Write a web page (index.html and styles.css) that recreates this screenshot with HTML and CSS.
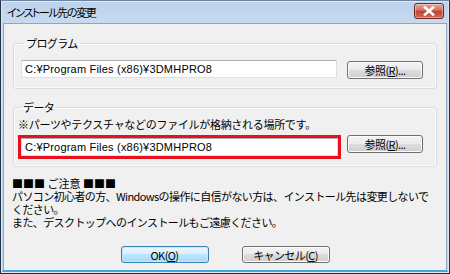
FILE: index.html
```html
<!DOCTYPE html>
<html lang="ja">
<head>
<meta charset="utf-8">
<link rel="stylesheet" href="styles.css">
</head>
<body>
<div class="window">
  <div class="titlebar">
    <span class="title">インストール先の変更</span>
    <button class="close" aria-label="閉じる">
      <svg width="14" height="10" viewBox="0 0 14 10"><path d="M3 1.5 L11 8.5 M11 1.5 L3 8.5" stroke="#ffffff" stroke-width="2.6" stroke-linecap="square"/></svg>
    </button>
  </div>
  <div class="content">
    <fieldset class="group group-program">
      <legend>プログラム</legend>
      <div class="row">
        <div class="field">C:¥Program Files (x86)¥3DMHPRO8</div>
        <button class="btn browse">参照(<u>R</u>)...</button>
      </div>
    </fieldset>
    <fieldset class="group group-data">
      <legend>データ</legend>
      <div class="hint">※パーツやテクスチャなどのファイルが格納される場所です。</div>
      <div class="row row-data">
        <div class="highlight"><div class="field">C:¥Program Files (x86)¥3DMHPRO8</div></div>
        <button class="btn browse">参照(<u>R</u>)...</button>
      </div>
    </fieldset>
    <div class="notes">
      <div class="note-head">■■■ ご注意 ■■■</div>
      <div>パソコン初心者の方、Windowsの操作に自信がない方は、インストール先は変更しないで</div>
      <div>ください。</div>
      <div>また、デスクトップへのインストールもご遠慮ください。</div>
    </div>
    <div class="actions">
      <button class="btn ok">OK(<u>O</u>)</button>
      <button class="btn">キャンセル(<u>C</u>)</button>
    </div>
  </div>
</div>
</body>
</html>
```

FILE: styles.css
```css
html, body {
  margin: 0;
  padding: 0;
  background: #ffffff;
}
body {
  font-family: "Noto Sans CJK JP", "Liberation Sans", sans-serif;
  font-size: 11px;
  color: #000;
}
.window {
  width: 450px;
  height: 274px;
  box-sizing: border-box;
  border: 1px solid #1f2f44;
  border-top-color: #6d84a0;
  background: linear-gradient(#bcd2eb, #c7daf0 22px, #bfd6ee);
  display: flex;
  flex-direction: column;
  padding: 0 2px 2px 2px;
  box-shadow: inset 0 0 0 1px #dbe8f5, inset 0 -2px 0 #3fa9dc;
}
.titlebar {
  height: 22px;
  flex: 0 0 22px;
  display: flex;
  align-items: center;
  justify-content: space-between;
  padding: 0 3px 0 4px;
}
.title {
  font-size: 11px;
  letter-spacing: -1.4px;
  font-feature-settings: "palt";
  line-height: 12px;
  margin-top: -1px;
}
.close {
  width: 30px;
  height: 16px;
  margin-top: -2px;
  padding: 0;
  border: 1px solid #6b2a22;
  border-radius: 3px;
  background: linear-gradient(#e9a79c, #d27160 45%, #c1412f 50%, #d06b55);
  display: flex;
  align-items: center;
  justify-content: center;
  box-shadow: inset 0 0 0 1px rgba(255,255,255,0.35);
}
.content {
  flex: 1;
  background: #f0f0f0;
  border: 1px solid #8ea6c2;
  border-bottom-color: #3fa9dc;
  display: flex;
  flex-direction: column;
  padding: 0 8px;
  box-sizing: border-box;
}
.group {
  margin: 12px 1px 0 1px;
  padding: 0;
  border: 1px solid #d5dfe5;
  border-radius: 3px;
  box-shadow: inset 0 0 0 1px #fbfbfb;
}
.group-program {
  margin-top: 13px;
  padding: 11px 13px 9px 7px;
}
.group-data {
  padding: 5px 13px 7px 4px;
}
.group legend {
  padding: 0 2px;
  margin-left: 3px;
  line-height: 12px;
  letter-spacing: -0.6px;
}
.row {
  display: flex;
  align-items: flex-start;
  gap: 10px;
}
.row-data {
  gap: 6px;
}
.hint {
  line-height: 12px;
  letter-spacing: -0.3px;
  margin-bottom: 5px;
}
.field {
  flex: 1;
  height: 18px;
  box-sizing: border-box;
  background: #fff;
  border: 1px solid #dbdfe6;
  border-top-color: #abadb3;
  font-family: "Liberation Sans", sans-serif;
  font-size: 11px;
  letter-spacing: 0.2px;
  line-height: 16px;
  padding-left: 3px;
  white-space: nowrap;
}
.highlight {
  flex: 1;
  display: flex;
  border: 3px solid #e8101a;
}
.btn {
  font-family: "Noto Sans CJK JP", "Liberation Sans", sans-serif;
  font-size: 11px;
  letter-spacing: -0.6px;
  color: #000;
  height: 18px;
  padding: 0;
  line-height: 14px;
  border: 1px solid #707070;
  border-radius: 3px;
  background: linear-gradient(#f2f2f2 0%, #ebebeb 50%, #dddddd 50%, #cfcfcf 100%);
  box-shadow: inset 0 0 0 1px #fcfcfc;
}
.btn u {
  text-underline-offset: 1px;
}
.browse {
  width: 76px;
  flex: 0 0 76px;
  margin-top: 1px;
}
.row-data .browse {
  margin-top: 0;
}
.notes {
  margin-top: 10px;
  line-height: 13px;
  letter-spacing: -0.6px;
  white-space: nowrap;
}
.note-head {
  letter-spacing: 0;
}
.actions {
  display: flex;
  justify-content: center;
  gap: 33px;
  margin-top: 17px;
}
.actions .btn {
  width: 88px;
  height: 17px;
}
.ok {
  border-color: #3c7fb1;
  background: linear-gradient(#eaf6fd 0%, #d9f0fc 50%, #bee6fd 50%, #a7d9f5 100%);
  box-shadow: inset 0 0 0 1px #c8e9fb;
}
```
